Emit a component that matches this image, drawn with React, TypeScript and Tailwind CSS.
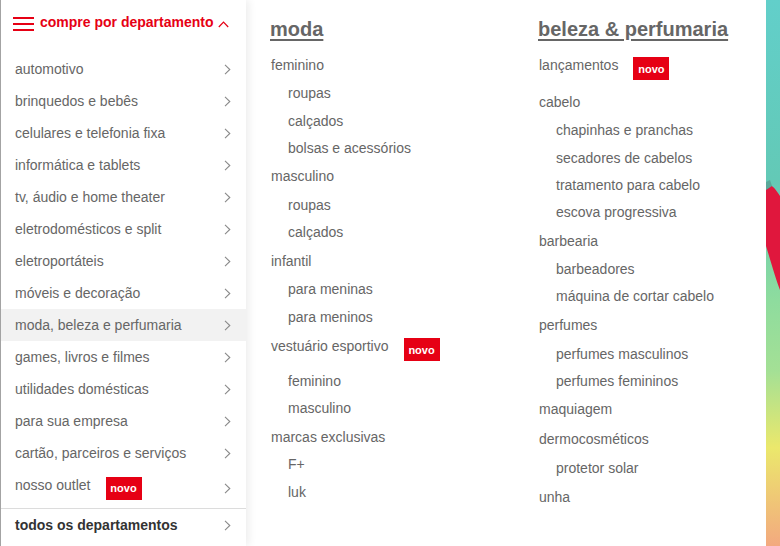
import React from "react";

const font = { fontFamily: '"Liberation Sans", Arial, sans-serif' };

const leftItems = [
  "automotivo",
  "brinquedos e bebês",
  "celulares e telefonia fixa",
  "informática e tablets",
  "tv, áudio e home theater",
  "eletrodomésticos e split",
  "eletroportáteis",
  "móveis e decoração",
  "moda, beleza e perfumaria",
  "games, livros e filmes",
  "utilidades domésticas",
  "para sua empresa",
  "cartão, parceiros e serviços",
];

type Item = { t: string; sub?: boolean; h: number; badge?: boolean };

const col1: Item[] = [
  { t: "feminino", h: 28 },
  { t: "roupas", sub: true, h: 28 },
  { t: "calçados", sub: true, h: 27 },
  { t: "bolsas e acessórios", sub: true, h: 28 },
  { t: "masculino", h: 29 },
  { t: "roupas", sub: true, h: 27 },
  { t: "calçados", sub: true, h: 29 },
  { t: "infantil", h: 28 },
  { t: "para meninas", sub: true, h: 28 },
  { t: "para meninos", sub: true, h: 29 },
  { t: "vestuário esportivo", h: 35, badge: true },
  { t: "feminino", sub: true, h: 27 },
  { t: "masculino", sub: true, h: 29 },
  { t: "marcas exclusivas", h: 27 },
  { t: "F+", sub: true, h: 28 },
  { t: "luk", sub: true, h: 28 },
];

const col2: Item[] = [
  { t: "lançamentos", h: 37, badge: true },
  { t: "cabelo", h: 28 },
  { t: "chapinhas e pranchas", sub: true, h: 28 },
  { t: "secadores de cabelos", sub: true, h: 27 },
  { t: "tratamento para cabelo", sub: true, h: 27 },
  { t: "escova progressiva", sub: true, h: 29 },
  { t: "barbearia", h: 28 },
  { t: "barbeadores", sub: true, h: 27 },
  { t: "máquina de cortar cabelo", sub: true, h: 29 },
  { t: "perfumes", h: 29 },
  { t: "perfumes masculinos", sub: true, h: 27 },
  { t: "perfumes femininos", sub: true, h: 28 },
  { t: "maquiagem", h: 30 },
  { t: "dermocosméticos", h: 29 },
  { t: "protetor solar", sub: true, h: 29 },
  { t: "unha", h: 28 },
];

function Chevron() {
  return (
    <svg width="7" height="11" viewBox="0 0 7 11" className="shrink-0">
      <polyline points="1,0.8 5.8,5.5 1,10.2" fill="none" stroke="#8a8a8a" strokeWidth="1.1" />
    </svg>
  );
}

function Badge({ className = "" }: { className?: string }) {
  return (
    <span
      className={`inline-flex h-[23px] w-[36px] items-center justify-center bg-[#e60014] text-[11px] font-bold text-white ${className}`}
    >
      novo
    </span>
  );
}

function Column({ title, items }: { title: string; items: Item[] }) {
  return (
    <div className="flex flex-col">
      <div className="mb-[10px] h-[24px] text-[20px] font-bold leading-[24px] text-[#666] underline decoration-[2px] underline-offset-[3px]">
        {title}
      </div>
      {items.map((it, i) => (
        <div
          key={i}
          className={`flex items-start text-[14px] leading-[28px] text-[#666] ${it.sub ? "pl-[18px]" : "pl-px"}`}
          style={{ height: it.h }}
        >
          <span>{it.t}</span>
          {it.badge && <Badge className="ml-[15px] mt-[6px]" />}
        </div>
      ))}
    </div>
  );
}

export default function App() {
  return (
    <div className="flex h-[546px] w-[780px] overflow-hidden bg-white" style={font}>
      {/* left panel */}
      <div className="relative z-10 flex w-[246px] shrink-0 flex-col border-l border-[#a3a3a3] bg-white shadow-[3px_0_8px_rgba(0,0,0,0.07)]">
        <div className="flex h-[48px] items-center pl-[12px]">
          <div className="flex w-[21px] flex-col gap-[4px]">
            <span className="block h-[2px] w-full bg-[#e60014]" />
            <span className="block h-[2px] w-full bg-[#e60014]" />
            <span className="block h-[2px] w-full bg-[#e60014]" />
          </div>
          <span className="mb-[3px] ml-[6px] text-[14px] font-bold text-[#e60014]">compre por departamento</span>
          <svg width="11" height="7" viewBox="0 0 11 7" className="ml-[5px]">
            <polyline points="0.8,6 5.5,1.2 10.2,6" fill="none" stroke="#e60014" strokeWidth="1.2" />
          </svg>
        </div>
        <div className="flex flex-col pt-[5px]">
          {leftItems.map((t) => (
            <div
              key={t}
              className={`flex h-[32px] items-center justify-between pl-[14px] pr-[15px] text-[14px] text-[#666] ${
                t === "moda, beleza e perfumaria" ? "bg-[#f2f2f2]" : ""
              }`}
            >
              <span>{t}</span>
              <Chevron />
            </div>
          ))}
          <div className="flex h-[39px] items-center justify-between pl-[14px] pr-[15px] text-[14px] text-[#666]">
            <div className="flex items-center">
              <span className="mb-[7px]">nosso outlet</span>
              <Badge className="ml-[15px]" />
            </div>
            <Chevron />
          </div>
          <div className="flex h-[34px] items-center justify-between border-t border-[#dcdcdc] pl-[14px] pr-[15px] text-[14px] font-bold text-[#333]">
            <span>todos os departamentos</span>
            <Chevron />
          </div>
        </div>
      </div>

      {/* right panel */}
      <div className="grid flex-1 grid-cols-[268px_1fr] pl-[24px] pt-[17px]">
        <Column title="moda" items={col1} />
        <Column title="beleza & perfumaria" items={col2} />
      </div>

      {/* image strip */}
      <div className="w-[14px] shrink-0">
        <svg width="14" height="546" viewBox="0 0 14 546" preserveAspectRatio="none">
          <defs>
            <linearGradient id="bg" x1="0" y1="0" x2="0" y2="1">
              <stop offset="0" stopColor="#62cfca" />
              <stop offset="0.33" stopColor="#63c9b6" />
              <stop offset="0.55" stopColor="#8edc9e" />
              <stop offset="0.68" stopColor="#a4e095" />
              <stop offset="0.82" stopColor="#ebe86c" />
              <stop offset="1" stopColor="#f3a97f" />
            </linearGradient>
          </defs>
          <rect width="14" height="546" fill="url(#bg)" />
          <path d="M0,186 C4,182 9,188 14,196 L14,290 C10,280 5,262 0,246 Z" fill="#e0173d" />
          <path d="M0,182 L4,180 L6,186 L0,190 Z" fill="#5aa89a" />
        </svg>
      </div>
    </div>
  );
}
